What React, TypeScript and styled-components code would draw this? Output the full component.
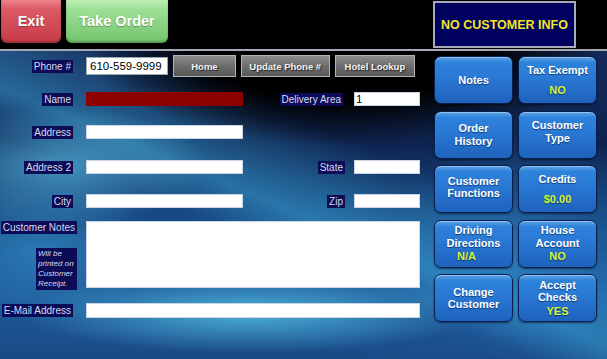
import React from "react";
import styled, { createGlobalStyle } from "styled-components";

const Global = createGlobalStyle`
  html, body { margin: 0; padding: 0; background: #000; }
  body { width: 607px; height: 359px; overflow: hidden; font-family: "Liberation Sans", Arial, sans-serif; }
  * { box-sizing: border-box; }
`;

const Page = styled.div`
  width: 607px;
  height: 359px;
  display: flex;
  flex-direction: column;
  background: #000;
`;

const TopBar = styled.div`
  height: 51px;
  display: flex;
  align-items: flex-start;
  padding-left: 1px;
  background: #000;
  border-bottom: 2px solid #a4aab4;
  flex-shrink: 0;
`;

const TopButton = styled.div<{ $tone: "red" | "green"; $w: number }>`
  width: ${(p) => p.$w}px;
  height: 45px;
  margin-top: -2px;
  margin-right: 5px;
  border-radius: 0 0 6px 6px;
  display: flex;
  align-items: center;
  justify-content: center;
  color: #fff;
  font-weight: bold;
  font-size: 14.5px;
  text-shadow: 0 1px 1px rgba(0, 0, 0, 0.3);
  background: ${(p) =>
    p.$tone === "red"
      ? "linear-gradient(#f08a92 0%, #dc5a66 25%, #c63a48 100%)"
      : "linear-gradient(#c4f2bc 0%, #9ee096 25%, #72c46c 100%)"};
  box-shadow: inset 0 -2px 2px rgba(0, 0, 0, 0.2);
`;

const Spacer = styled.div`
  flex: 1;
`;

const InfoBox = styled.div`
  width: 143px;
  height: 47px;
  margin-top: 1px;
  margin-right: 31px;
  background: #00005e;
  border: 2px solid #a8aab8;
  color: #f2e62a;
  font-weight: bold;
  font-size: 12.5px;
  display: flex;
  align-items: center;
  justify-content: center;
`;

const Main = styled.div`
  flex: 1;
  display: flex;
  background:
    radial-gradient(ellipse 260px 100px at 345px -5px, rgba(0, 0, 0, 1) 55%, rgba(0, 0, 0, 0) 100%),
    radial-gradient(ellipse 150px 60px at 60px 115px, rgba(100, 210, 245, 0.6) 0%, rgba(100, 210, 245, 0) 100%),
    radial-gradient(ellipse 230px 40px at 250px 262px, rgba(90, 205, 240, 0.75) 0%, rgba(90, 205, 240, 0) 100%),
    radial-gradient(ellipse 120px 70px at 40px 200px, rgba(60, 170, 225, 0.45) 0%, rgba(60, 170, 225, 0) 100%),
    radial-gradient(ellipse 130px 120px at 520px 190px, rgba(50, 140, 215, 0.4) 0%, rgba(50, 140, 215, 0) 100%),
    linear-gradient(203deg, rgba(0,0,0,0) 35%, rgba(60, 170, 220, 0.5) 52%, rgba(30, 90, 160, 0.2) 60%, rgba(0,0,0,0) 75%),
    linear-gradient(180deg, #142a5a 0%, #0e2450 30%, #1a4f8a 60%, #1e5a98 80%, #1a4a86 100%);
`;

const Form = styled.div`
  width: 434px;
  display: flex;
  flex-direction: column;
  padding-top: 4px;
`;

const Row = styled.div<{ $top: number; $h: number }>`
  display: grid;
  grid-template-columns: 86px 157px 111px 66px;
  margin-top: ${(p) => p.$top}px;
  height: ${(p) => p.$h}px;
  align-items: center;
`;

const LabelCell = styled.div<{ $pr?: number; $start?: boolean }>`
  display: flex;
  flex-direction: column;
  align-items: flex-end;
  align-self: ${(p) => (p.$start ? "stretch" : "center")};
  padding-right: ${(p) => p.$pr ?? 13}px;
`;

const Label = styled.span`
  background: #0b0b56;
  color: #d6dcf2;
  font-size: 10px;
  line-height: 13px;
  padding: 0 2px;
  white-space: nowrap;
`;

const Note = styled.span`
  margin-top: 14px;
  width: 41px;
  background: #0b0b56;
  color: #d6dcf2;
  font-size: 8px;
  font-style: italic;
  line-height: 10px;
  padding: 1px 2px;
`;

const Field = styled.div<{ $red?: boolean; $span?: string; $h?: number }>`
  height: ${(p) => p.$h ?? 14}px;
  background: ${(p) => (p.$red ? "#8c0000" : "#fff")};
  border: 1px solid ${(p) => (p.$red ? "#8c0000" : "#c8d4e4")};
  grid-column: ${(p) => p.$span ?? "auto"};
  align-self: ${(p) => (p.$h && p.$h > 20 ? "stretch" : "center")};
  font-size: 11.5px;
  line-height: 12px;
  color: #000;
  padding-left: 1px;
`;

const PhoneBar = styled.div`
  grid-column: 2 / 5;
  display: flex;
  align-items: center;
  height: 22px;
`;

const PhoneInput = styled.div`
  width: 83px;
  height: 18px;
  background: #fff;
  border: 1px solid #9aa;
  font-size: 11.5px;
  line-height: 16px;
  padding-left: 3px;
  margin-right: 5px;
`;

const GrayButton = styled.div<{ $w: number }>`
  width: ${(p) => p.$w}px;
  height: 22px;
  margin-right: 5px;
  border: 1px solid #b4b4b4;
  background: linear-gradient(#8e8e8e 0%, #6c6c6c 50%, #585858 100%);
  color: #f4f4f4;
  font-weight: bold;
  font-size: 9.5px;
  display: flex;
  align-items: center;
  justify-content: center;
  text-shadow: 1px 1px 1px #222;
`;

const Side = styled.div`
  display: grid;
  grid-template-columns: 79px 79px;
  grid-auto-rows: 48px;
  column-gap: 5px;
  row-gap: 6.5px;
  padding-top: 5px;
  align-content: start;
`;

const BlueButton = styled.div<{ $shift?: number }>`
  border-radius: 7px;
  border: 1px solid #082050;
  background:
    linear-gradient(rgba(255, 255, 255, 0.22) 0px, rgba(255, 255, 255, 0.08) 4px, rgba(255, 255, 255, 0) 5px),
    linear-gradient(#2f86dc 0%, #2a7ad6 40%, #1e62bc 100%);
  box-shadow: inset 0 1px 0 rgba(170, 210, 255, 0.7), 0 1px 2px rgba(0, 0, 0, 0.5);
  display: flex;
  flex-direction: column;
  align-items: center;
  justify-content: center;
  padding-bottom: ${(p) => p.$shift ?? 0}px;
  color: #fff;
  font-weight: bold;
  font-size: 11px;
  line-height: 12.5px;
  text-align: center;
  text-shadow: 0 1px 1px rgba(0, 20, 60, 0.6);
`;

const Value = styled.span<{ $gap?: number; $offset?: number }>`
  color: #d8f43a;
  margin-top: ${(p) => p.$gap ?? 8}px;
  margin-right: ${(p) => p.$offset ?? 0}px;
`;

export default function App() {
  return (
    <Page>
      <Global />
      <TopBar>
        <TopButton $tone="red" $w={60}>Exit</TopButton>
        <TopButton $tone="green" $w={102}>Take Order</TopButton>
        <Spacer />
        <InfoBox>NO CUSTOMER INFO</InfoBox>
      </TopBar>
      <Main>
        <Form>
          <Row $top={0} $h={22}>
            <LabelCell><Label>Phone #</Label></LabelCell>
            <PhoneBar>
              <PhoneInput>610-559-9999</PhoneInput>
              <GrayButton $w={63}>Home</GrayButton>
              <GrayButton $w={90}>Update Phone #</GrayButton>
              <GrayButton $w={81}>Hotel Lookup</GrayButton>
            </PhoneBar>
          </Row>
          <Row $top={15} $h={14}>
            <LabelCell><Label>Name</Label></LabelCell>
            <Field $red />
            <LabelCell $pr={11}><Label>Delivery Area</Label></LabelCell>
            <Field>1</Field>
          </Row>
          <Row $top={19} $h={14}>
            <LabelCell><Label>Address</Label></LabelCell>
            <Field />
          </Row>
          <Row $top={21} $h={14}>
            <LabelCell><Label>Address 2</Label></LabelCell>
            <Field />
            <LabelCell $pr={9}><Label>State</Label></LabelCell>
            <Field />
          </Row>
          <Row $top={20} $h={14}>
            <LabelCell><Label>City</Label></LabelCell>
            <Field />
            <LabelCell $pr={9}><Label>Zip</Label></LabelCell>
            <Field />
          </Row>
          <Row $top={13} $h={67}>
            <LabelCell $pr={9} $start>
              <Label>Customer Notes</Label>
              <Note>Will be printed on Customer Receipt.</Note>
            </LabelCell>
            <Field $span="2 / 5" $h={67} />
          </Row>
          <Row $top={15} $h={15}>
            <LabelCell><Label>E-Mail Address</Label></LabelCell>
            <Field $span="2 / 5" $h={15} />
          </Row>
        </Form>
        <Side>
          <BlueButton>Notes</BlueButton>
          <BlueButton>Tax Exempt<Value>NO</Value></BlueButton>
          <BlueButton>Order<br />History</BlueButton>
          <BlueButton $shift={6}>Customer<br />Type</BlueButton>
          <BlueButton $shift={4}>Customer<br />Functions</BlueButton>
          <BlueButton>Credits<Value>$0.00</Value></BlueButton>
          <BlueButton>Driving<br />Directions<Value $gap={1} $offset={14}>N/A</Value></BlueButton>
          <BlueButton>House<br />Account<Value $gap={1}>NO</Value></BlueButton>
          <BlueButton>Change<br />Customer</BlueButton>
          <BlueButton>Accept<br />Checks<Value $gap={1}>YES</Value></BlueButton>
        </Side>
      </Main>
    </Page>
  );
}
